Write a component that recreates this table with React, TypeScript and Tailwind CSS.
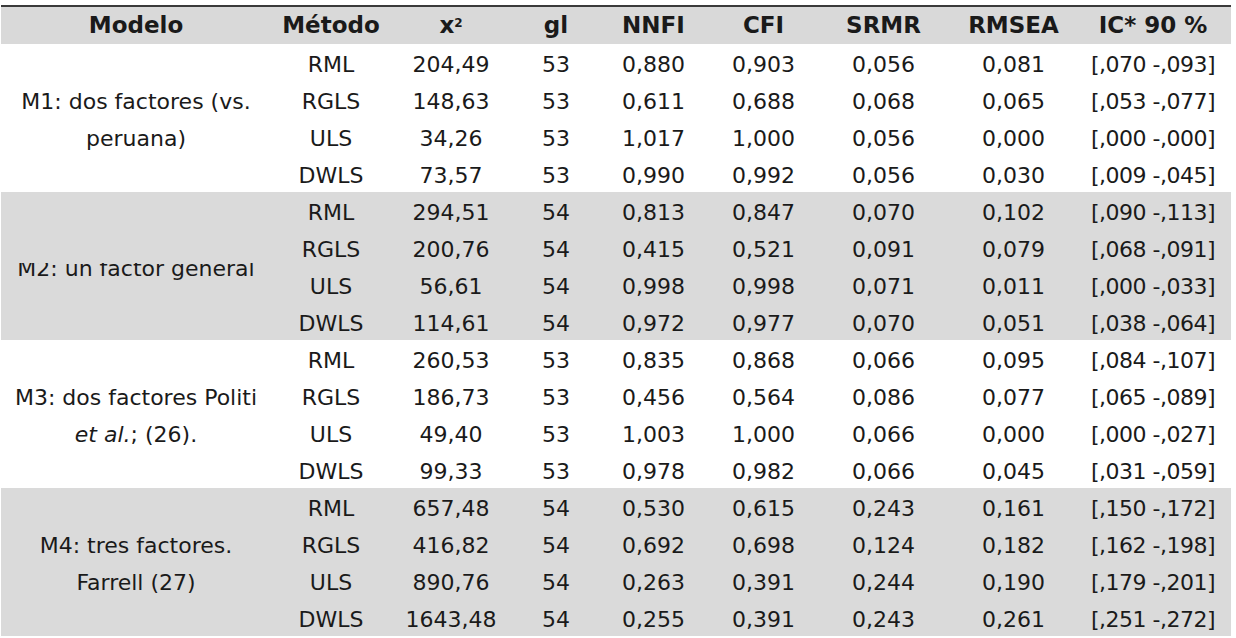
import React from "react";

type Row = [string, string, string, string, string, string, string, string];

const groups: { label: React.ReactNode; gray: boolean; clipped?: boolean; rows: Row[] }[] = [
  {
    label: (
      <>
        M1: dos factores (vs.
        <br />
        peruana)
      </>
    ),
    gray: false,
    rows: [
      ["RML", "204,49", "53", "0,880", "0,903", "0,056", "0,081", "[,070 -,093]"],
      ["RGLS", "148,63", "53", "0,611", "0,688", "0,068", "0,065", "[,053 -,077]"],
      ["ULS", "34,26", "53", "1,017", "1,000", "0,056", "0,000", "[,000 -,000]"],
      ["DWLS", "73,57", "53", "0,990", "0,992", "0,056", "0,030", "[,009 -,045]"],
    ],
  },
  {
    label: "M2: un factor general",
    gray: true,
    clipped: true,
    rows: [
      ["RML", "294,51", "54", "0,813", "0,847", "0,070", "0,102", "[,090 -,113]"],
      ["RGLS", "200,76", "54", "0,415", "0,521", "0,091", "0,079", "[,068 -,091]"],
      ["ULS", "56,61", "54", "0,998", "0,998", "0,071", "0,011", "[,000 -,033]"],
      ["DWLS", "114,61", "54", "0,972", "0,977", "0,070", "0,051", "[,038 -,064]"],
    ],
  },
  {
    label: (
      <>
        M3: dos factores Politi
        <br />
        <i>et al.</i>; (26).
      </>
    ),
    gray: false,
    rows: [
      ["RML", "260,53", "53", "0,835", "0,868", "0,066", "0,095", "[,084 -,107]"],
      ["RGLS", "186,73", "53", "0,456", "0,564", "0,086", "0,077", "[,065 -,089]"],
      ["ULS", "49,40", "53", "1,003", "1,000", "0,066", "0,000", "[,000 -,027]"],
      ["DWLS", "99,33", "53", "0,978", "0,982", "0,066", "0,045", "[,031 -,059]"],
    ],
  },
  {
    label: (
      <>
        M4: tres factores.
        <br />
        Farrell (27)
      </>
    ),
    gray: true,
    rows: [
      ["RML", "657,48", "54", "0,530", "0,615", "0,243", "0,161", "[,150 -,172]"],
      ["RGLS", "416,82", "54", "0,692", "0,698", "0,124", "0,182", "[,162 -,198]"],
      ["ULS", "890,76", "54", "0,263", "0,391", "0,244", "0,190", "[,179 -,201]"],
      ["DWLS", "1643,48", "54", "0,255", "0,391", "0,243", "0,261", "[,251 -,272]"],
    ],
  },
];

const cols = "grid-cols-[270px_120px_120px_90px_105px_115px_125px_135px_150px]";

export default function App() {
  return (
    <div
      className="w-[1236px] h-[638px] bg-white pt-[5px] pl-[1px] overflow-hidden text-[#1a1a1a]"
      style={{ fontFamily: '"DejaVu Sans", Verdana, sans-serif' }}
    >
      <div className="w-[1230px] border-t-2 border-[#3a3a3a]">
        <div className={`grid ${cols} h-[37px] bg-[#d9d9d9] items-center text-center font-bold text-[23px]`}>
          <div>Modelo</div>
          <div>Método</div>
          <div>
            x<sup className="text-[12px]">2</sup>
          </div>
          <div>gl</div>
          <div>NNFI</div>
          <div>CFI</div>
          <div>SRMR</div>
          <div>RMSEA</div>
          <div className="pr-[6px]">IC* 90 %</div>
        </div>
        {groups.map((g, gi) => (
          <div
            key={gi}
            className={`grid ${cols} h-[148px] text-[22px] text-center ${g.gray ? "bg-[#dadada]" : "bg-white"}`}
          >
            <div className="row-span-4 flex items-center justify-center leading-[37px] pt-[3px]">
              {g.clipped ? (
                <div className="h-[17px] overflow-hidden flex items-end mt-[7px]">
                  <span className="leading-[22px] block whitespace-nowrap">{g.label}</span>
                </div>
              ) : (
                <div>{g.label}</div>
              )}
            </div>
            {g.rows.map((r, ri) => (
              <React.Fragment key={ri}>
                {r.map((c, ci) => (
                  <div
                    key={ci}
                    className={`h-[37px] leading-[41px] whitespace-nowrap ${ci === 7 ? "pr-[6px] tracking-[-0.5px]" : ""}`}
                    style={{ gridColumnStart: ci + 2, gridRowStart: ri + 1 }}
                  >
                    {c}
                  </div>
                ))}
              </React.Fragment>
            ))}
          </div>
        ))}
      </div>
    </div>
  );
}
